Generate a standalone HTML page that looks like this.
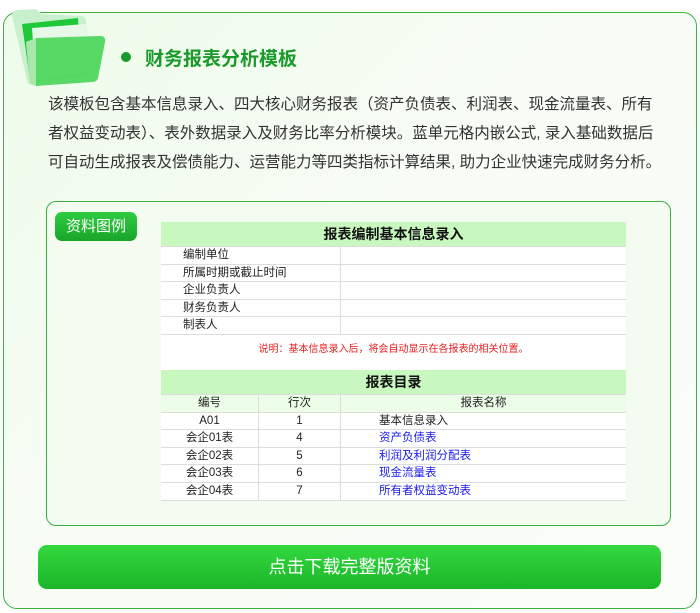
<!DOCTYPE html>
<html><head><meta charset="utf-8"><style>
*{margin:0;padding:0;box-sizing:border-box}
body{width:700px;height:613px;background:#fff;font-family:"Liberation Sans","Noto Sans CJK SC",sans-serif;position:relative;overflow:hidden}
.outer{position:absolute;left:3px;top:12px;width:694px;height:597px;border:1.5px solid #3cb043;border-radius:14px;background:linear-gradient(135deg,#eefbea,#f8fdf6 50%,#fafdf8)}
.title{position:absolute;left:145px;top:44px;font-size:19px;font-weight:bold;color:#1a9a2a}
.dot{position:absolute;left:121px;top:52px;width:10px;height:10px;border-radius:50%;background:#1a9a2a}
.desc{position:absolute;left:48px;top:90px;width:640px;font-size:15.5px;line-height:29px;color:#333;white-space:nowrap}
.inner{position:absolute;left:46px;top:201px;width:625px;height:325px;border:1.5px solid #3cb043;border-radius:10px;background:#f4fcf1}
.tag{position:absolute;left:55px;top:212px;width:82px;height:29px;border-radius:7px;background:linear-gradient(#2ecc40,#1aa52a);color:#fff;font-size:15px;line-height:29px;text-align:center}
.tbl{position:absolute;left:161px;top:222px;width:465px;background:#fff;font-size:11.5px;color:#222}
.r{display:flex;height:17.6px;border-bottom:1px solid #ddd;line-height:17px}
.h{display:block;height:25px;background:#c8f7c0;font-weight:bold;font-size:14px;text-align:center;line-height:25px;color:#111}
.c1{width:180px;padding-left:22px;border-right:1px solid #ddd}
.k1{width:98px;text-align:center;border-right:1px solid #ddd}
.k2{width:82px;text-align:center;border-right:1px solid #ddd}
.k3{flex:1;padding-left:38px}
.blue{color:#1a1aee}
.btn{position:absolute;left:38px;top:545px;width:623px;height:44px;border-radius:9px;background:linear-gradient(#33d93f,#1cb52a);color:#fff;font-size:18px;text-align:center;line-height:44px}
</style></head><body>
<div class="outer"></div>
<svg style="position:absolute;left:6px;top:2px" width="100" height="90" viewBox="0 0 100 90">
<path d="M6 14 Q6 8 12 8 L30 7 L36 12 L74 14 Q80 14 80 20 L82 74 L22 82 Z" fill="#c9f0cc"/>
<path d="M16 22 L72 16 L74 70 L24 78 Z" fill="#1fc838"/>
<path d="M26 26 L80 22 L80 70 L30 78 Z" fill="#e8f8e8"/>
<path d="M30 36 L94 34 Q100 34 99 40 L92 76 Q91 80 86 80 L30 84 Z" fill="#4bd65a" opacity="0.92"/>
<path d="M20 40 L30 36 L30 84 L24 82 Z" fill="#a8e8ad"/>
</svg>
<div class="dot"></div>
<div class="title">财务报表分析模板</div>
<div class="desc">该模板包含基本信息录入、四大核心财务报表（资产负债表、利润表、现金流量表、所有<br>者权益变动表）、表外数据录入及财务比率分析模块。蓝单元格内嵌公式, 录入基础数据后<br>可自动生成报表及偿债能力、运营能力等四类指标计算结果, 助力企业快速完成财务分析。</div>
<div class="inner"></div>
<div class="tag">资料图例</div>
<div class="tbl">
<div class="r h">报表编制基本信息录入</div>
<div class="r"><div class="c1">编制单位</div></div>
<div class="r"><div class="c1">所属时期或截止时间</div></div>
<div class="r"><div class="c1">企业负责人</div></div>
<div class="r"><div class="c1">财务负责人</div></div>
<div class="r"><div class="c1">制表人</div></div>
<div style="height:35px;color:#e82020;font-size:10px;text-align:center;padding-top:5px">说明：基本信息录入后，将会自动显示在各报表的相关位置。</div>
<div class="r h">报表目录</div>
<div class="r" style="background:#ecfde8"><div class="k1">编号</div><div class="k2">行次</div><div style="flex:1;text-align:center">报表名称</div></div>
<div class="r"><div class="k1">A01</div><div class="k2">1</div><div class="k3">基本信息录入</div></div>
<div class="r"><div class="k1">会企01表</div><div class="k2">4</div><div class="k3 blue">资产负债表</div></div>
<div class="r"><div class="k1">会企02表</div><div class="k2">5</div><div class="k3 blue">利润及利润分配表</div></div>
<div class="r"><div class="k1">会企03表</div><div class="k2">6</div><div class="k3 blue">现金流量表</div></div>
<div class="r"><div class="k1">会企04表</div><div class="k2">7</div><div class="k3 blue">所有者权益变动表</div></div>
</div>
<div class="btn">点击下载完整版资料</div>
</body></html>
